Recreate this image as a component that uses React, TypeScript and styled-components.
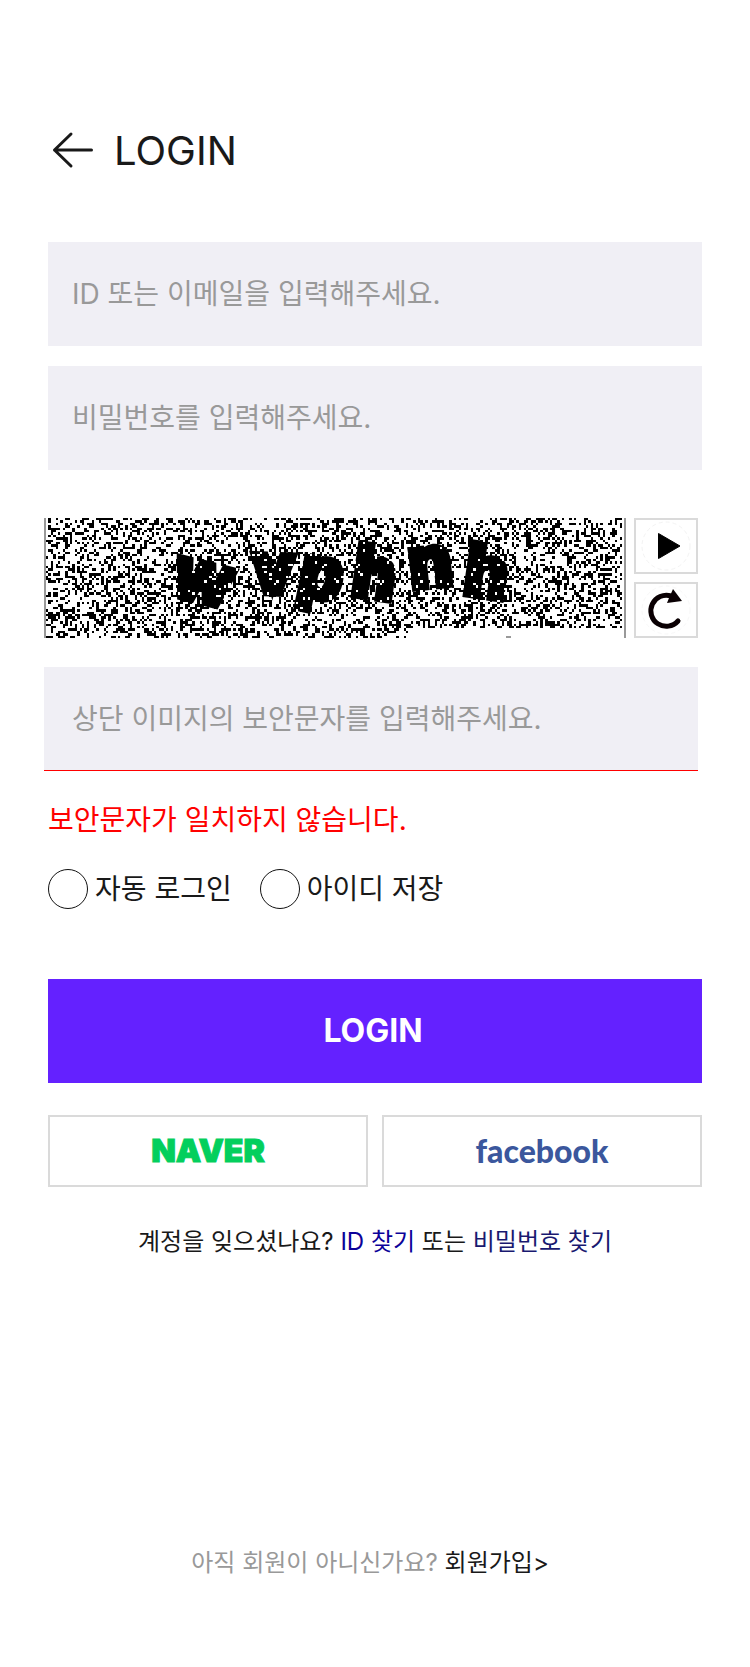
import React from 'react';
import styled, { createGlobalStyle } from 'styled-components';

const GlobalStyle = createGlobalStyle`
  * { box-sizing: border-box; }
  body {
    margin: 0;
    background: #fff;
    color: #191919;
    font-family: Inter, 'Noto Sans CJK KR', sans-serif;
    font-size: 28px;
    line-height: 40px;
  }
  button, input { font: inherit; color: inherit; }
  a { color: inherit; text-decoration: none; }
`;

const Page = styled.main`
  padding: 120px 48px 72px;
`;

const Header = styled.header`
  display: flex;
  align-items: center;
  gap: 20px;
  height: 60px;
`;

const BackLink = styled.a`
  display: flex;
  margin-left: 4px;
`;

const Title = styled.h1`
  margin: 0;
  padding-top: 2px;
  font-size: 40px;
  font-weight: 400;
  line-height: 60px;
`;

const Form = styled.form`
  display: flex;
  flex-direction: column;
  margin-top: 62px;
`;

const Field = styled.input<{ $invalid?: boolean }>`
  width: 100%;
  height: 104px;
  padding: 0 24px;
  border: 0;
  border-radius: 0;
  border-bottom: ${(p) => (p.$invalid ? '1px solid #f00' : '0')};
  background: #f0eff5;
  outline: none;
  &::placeholder { color: #999; opacity: 1; }
`;

const Credentials = styled.div`
  display: grid;
  gap: 20px;
`;

const CaptchaBlock = styled.section`
  display: grid;
  gap: 29px;
  margin: 48px 4px 0 -4px;

  ${Field} { padding-left: 28px; }
`;

const CaptchaRow = styled.div`
  display: flex;
  gap: 8px;
  height: 120px;
`;

const CaptchaImage = styled.svg`
  flex: 1;
  min-width: 0;
  height: 120px;
  border-left: 2px solid #999;
  border-right: 2px solid #999;
`;

const CaptchaTools = styled.div`
  display: grid;
  gap: 8px;
  width: 64px;
`;

const ToolButton = styled.button`
  display: grid;
  place-items: center;
  padding: 0;
  border: 2px solid #dadada;
  background: #fff;
`;

const ErrorText = styled.p`
  margin: 29px 0 0;
  color: #f00;
`;

const Options = styled.div`
  display: flex;
  gap: 28px;
  margin-top: 29px;
`;

const Option = styled.label`
  display: flex;
  align-items: center;
  gap: 7px;
`;

const Check = styled.input`
  appearance: none;
  width: 40px;
  height: 40px;
  margin: 0;
  border: 1px solid #111;
  border-radius: 50%;
  &:checked { background: #6421ff; }
`;

const SubmitButton = styled.button`
  height: 104px;
  margin-top: 70px;
  padding: 0 4px 0 0;
  border: 0;
  background: #6421ff;
  color: #fff;
  font-size: 32px;
  font-weight: 700;
`;

const SocialRow = styled.div`
  display: grid;
  grid-template-columns: 1fr 1fr;
  gap: 14px;
  margin-top: 32px;
`;

const SocialButton = styled.button`
  height: 72px;
  padding: 0;
  border: 2px solid #dadada;
  background: #fff;
  font-size: 32px;
  font-weight: 900;
`;

const NaverButton = styled(SocialButton)`
  color: #03cf5d;
  font-family: Inter, sans-serif;
  -webkit-text-stroke: 1px #03cf5d;
`;

const FacebookButton = styled(SocialButton)`
  color: #3b579d;
  font-family: Lato, sans-serif;
`;

const Note = styled.p`
  margin: 37px 0 0;
  font-size: 24px;
  line-height: 36px;
  text-align: center;
`;

const JoinNote = styled(Note)`
  margin-top: 285px;
  padding-right: 10px;
  color: #999;
`;

const NoteLink = styled.a<{ $color: string }>`
  color: ${(p) => p.$color};
`;

const COLS = 240;
const ROWS = 50;
const CELL = 2.4;

function speckle(seed: number, density: number) {
  let state = seed;
  const next = () => {
    state = (state + 0x6d2b79f5) | 0;
    let t = Math.imul(state ^ (state >>> 15), 1 | state);
    t = (t + Math.imul(t ^ (t >>> 7), 61 | t)) ^ t;
    return ((t ^ (t >>> 14)) >>> 0) / 4294967296;
  };
  let d = '';
  for (let y = 0; y < ROWS; y += 1) {
    for (let x = 0; x < COLS; x += 1) {
      const hit = next() < density;
      const blank = y > 45 && x > 152;
      if (hit && !blank) d += `M${x} ${y}h1v1h-1z`;
    }
  }
  return d;
}

const darkSpecks = speckle(77, 0.4);
const lightSpecks = speckle(913, 0.05);

const glyphs = [
  { char: 'w', x: 126, y: 76, turn: 14 },
  { char: 'v', x: 207, y: 74, turn: 2 },
  { char: 'p', x: 250, y: 74, turn: 12 },
  { char: 'h', x: 304, y: 76, turn: 8 },
  { char: 'n', x: 365, y: 70, turn: -6 },
  { char: 'h', x: 416, y: 75, turn: 8 },
];

function Captcha() {
  return (
    <CaptchaImage viewBox="0 0 578 120" preserveAspectRatio="none" role="img" aria-label="보안문자">
      <path d={darkSpecks} transform={`scale(${CELL})`} shapeRendering="crispEdges" />
      <g fontFamily="Liberation Sans, sans-serif" fontSize="70" fontWeight="700" stroke="#000" strokeWidth="8">
        {glyphs.map((g) => (
          <text key={g.x} x={g.x} y={g.y} transform={`rotate(${g.turn} ${g.x} ${g.y})`}>{g.char}</text>
        ))}
      </g>
      <path d={lightSpecks} fill="#fff" transform={`scale(${CELL})`} shapeRendering="crispEdges" />
      <path d="M460 119h5" stroke="#999" strokeWidth="2" />
    </CaptchaImage>
  );
}

export default function App() {
  return (
    <Page>
      <GlobalStyle />
      <Header>
        <BackLink href="#back" aria-label="뒤로">
          <svg width="42" height="40" viewBox="0 0 42 40" fill="none" stroke="#191919" strokeWidth="3" strokeLinecap="round" strokeLinejoin="round">
            <path d="M19 4L2.500 20L19 36M2.500 20H39.500" />
          </svg>
        </BackLink>
        <Title>LOGIN</Title>
      </Header>
      <Form onSubmit={(e) => e.preventDefault()}>
        <Credentials>
          <Field type="text" aria-label="ID 또는 이메일" placeholder="ID 또는 이메일을 입력해주세요." />
          <Field type="password" aria-label="비밀번호" placeholder="비밀번호를 입력해주세요." />
        </Credentials>
        <CaptchaBlock>
          <CaptchaRow>
            <Captcha />
            <CaptchaTools>
              <ToolButton type="button" aria-label="음성 듣기">
                <svg width="50" height="50" viewBox="0 0 50 50">
                  <circle cx="25" cy="25" r="24" fill="none" stroke="#f3f3f3" strokeDasharray="4 3" />
                  <path d="M17.500 12.500L39 25L17.500 37.500Z" stroke="#000" strokeLinejoin="round" />
                </svg>
              </ToolButton>
              <ToolButton type="button" aria-label="새로고침">
                <svg width="50" height="50" viewBox="0 0 50 50">
                  <circle cx="25" cy="25" r="24" fill="none" stroke="#f8f8f8" strokeDasharray="4 3" />
                  <path d="M37 36A15.500 15.500 0 1 1 30 11" fill="none" stroke="#0a0003" strokeWidth="5" strokeLinecap="round" />
                  <path d="M32 4L41 16L26 18L28 13Z" fill="#0a0003" />
                </svg>
              </ToolButton>
            </CaptchaTools>
          </CaptchaRow>
          <Field $invalid type="text" aria-label="보안문자 입력" aria-invalid="true" aria-describedby="captcha-error" placeholder="상단 이미지의 보안문자를 입력해주세요." />
        </CaptchaBlock>
        <ErrorText id="captcha-error">보안문자가 일치하지 않습니다.</ErrorText>
        <Options>
          <Option><Check type="checkbox" />자동 로그인</Option>
          <Option><Check type="checkbox" />아이디 저장</Option>
        </Options>
        <SubmitButton type="submit">LOGIN</SubmitButton>
      </Form>
      <SocialRow>
        <NaverButton type="button">NAVER</NaverButton>
        <FacebookButton type="button">facebook</FacebookButton>
      </SocialRow>
      <Note>
        계정을 잊으셨나요? <NoteLink href="#find-id" $color="#0c0299">ID 찾기</NoteLink> 또는{' '}
        <NoteLink href="#find-password" $color="#191970">비밀번호 찾기</NoteLink>
      </Note>
      <JoinNote>
        아직 회원이 아니신가요? <NoteLink href="#join" $color="#191919">회원가입&gt;</NoteLink>
      </JoinNote>
    </Page>
  );
}
